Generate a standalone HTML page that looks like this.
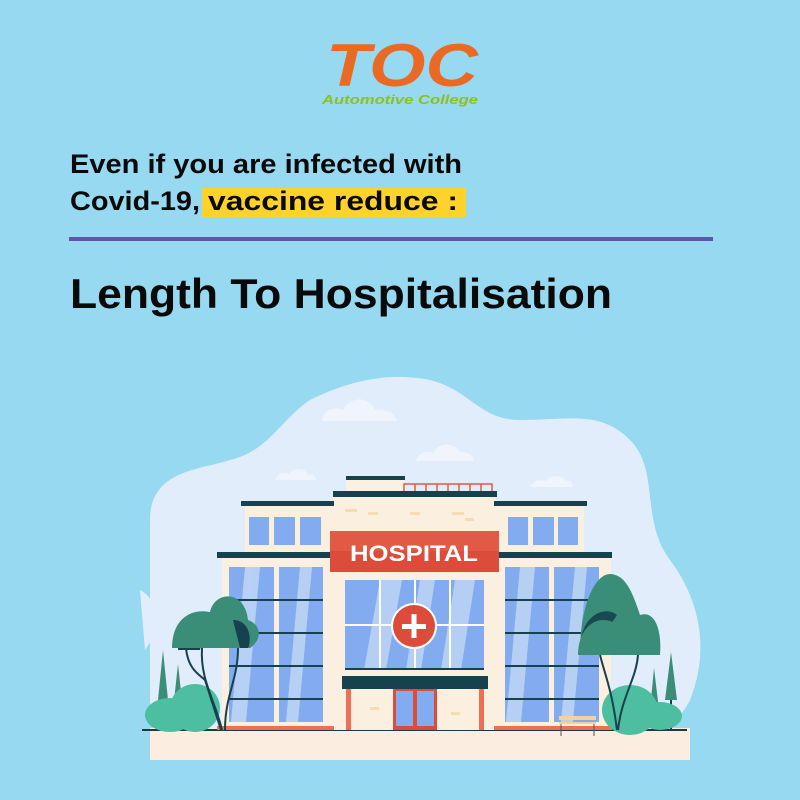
<!DOCTYPE html>
<html><head><meta charset="utf-8"><style>
html,body{margin:0;padding:0;background:#96d9f0;}
svg{display:block}
text{font-family:"Liberation Sans",sans-serif;font-weight:bold}
</style></head><body>
<svg width="800" height="800" viewBox="0 0 800 800" xmlns="http://www.w3.org/2000/svg">
<rect width="800" height="800" fill="#96d9f0"/>
<!-- logo -->
<text x="326" y="86" font-size="60" font-style="italic" fill="#ea6a24" textLength="152" lengthAdjust="spacingAndGlyphs">TOC</text>
<text x="322" y="104" font-size="13" font-style="italic" fill="#8cc21a" textLength="156" lengthAdjust="spacingAndGlyphs">Automotive College</text>
<!-- heading -->
<rect x="202" y="188" width="264" height="29" fill="#fdd32b"/>
<text x="70" y="173" font-size="27" fill="#0a0a0a" textLength="392" lengthAdjust="spacingAndGlyphs">Even if you are infected with</text>
<text x="70" y="210" font-size="27" fill="#0a0a0a" textLength="130" lengthAdjust="spacingAndGlyphs">Covid-19,</text>
<text x="208" y="210" font-size="27" fill="#0a0a0a" textLength="250" lengthAdjust="spacingAndGlyphs">vaccine reduce :</text>
<rect x="69" y="237" width="644" height="4" fill="#5a57a8"/>
<text x="70" y="308" font-size="42" fill="#0a0a0a" textLength="542" lengthAdjust="spacingAndGlyphs">Length To Hospitalisation</text>
<!-- blob -->
<path d="M150 520 C150 470 200 470 230 460 C270 450 280 420 310 400 C350 380 390 372 430 380 C470 390 480 420 520 420 C570 420 600 410 630 440 C660 470 640 520 670 560 C700 600 710 650 690 700 C670 740 620 760 540 760 L260 760 C190 760 150 740 150 700 Z" fill="#e2edfb"/>
<path d="M140 590 C160 600 160 630 145 650 Z" fill="#e2edfb"/>
<!-- clouds -->
<g fill="#f0f5fd">
<path d="M322 421 C322 410 335 406 343 410 C350 396 370 396 375 410 C385 408 396 414 397 421 Z"/>
<path d="M416 461 C418 452 428 450 433 453 C438 442 455 442 460 452 C468 452 474 456 474 461 Z"/>
<path d="M275 480 C277 473 285 472 289 474 C294 467 306 468 308 475 C313 474 316 477 316 480 Z"/>
<path d="M531 487 C533 480 541 479 546 481 C550 474 563 475 566 481 C571 480 573 484 573 487 Z"/>
</g>
<!-- ground -->
<rect x="150" y="728" width="540" height="32" fill="#fbeee0"/>
<rect x="142" y="729" width="545" height="2" fill="#1a3a48"/>
<!-- building -->
<g>
<rect x="346" y="480" width="58" height="12" fill="#fbf0e2"/>
<rect x="346" y="476" width="59" height="4" fill="#17414f"/>
<g stroke="#e35a43" stroke-width="1.5" fill="none"><rect x="404" y="484" width="88" height="8"/>
<path d="M415 484v8M426 484v8M437 484v8M448 484v8M459 484v8M470 484v8M481 484v8"/></g>
<rect x="333" y="496" width="163" height="234" fill="#fbefe0"/>
<rect x="333" y="491" width="164" height="6" fill="#17414f"/>
<!-- upper wings -->
<rect x="245" y="505" width="90" height="50" fill="#fbefe0"/>
<rect x="494" y="505" width="90" height="50" fill="#fbefe0"/>
<rect x="241" y="501" width="93" height="5" fill="#17414f"/>
<rect x="494" y="501" width="93" height="5" fill="#17414f"/>
<g fill="#82acef">
<rect x="249" y="517" width="20" height="28"/><rect x="274" y="517" width="21" height="28"/><rect x="300" y="517" width="21" height="28"/>
<rect x="508" y="517" width="20" height="28"/><rect x="533" y="517" width="21" height="28"/><rect x="558" y="517" width="20" height="28"/>
</g>
<!-- lower wings -->
<rect x="222" y="557" width="112" height="173" fill="#fbefe0"/>
<rect x="494" y="557" width="117" height="173" fill="#fbefe0"/>
<rect x="217" y="552" width="117" height="6" fill="#17414f"/>
<rect x="494" y="552" width="118" height="6" fill="#17414f"/>
<g fill="#82acef">
<rect x="229" y="567" width="45" height="155"/><rect x="279" y="567" width="44" height="155"/>
<rect x="505" y="567" width="44" height="155"/><rect x="554" y="567" width="45" height="155"/>
</g>
<g fill="#c4d9f6" opacity=".8">
<path d="M245 567h15l-14 155h-15z"/><path d="M300 567h12l-14 155h-12z"/>
<path d="M520 567h15l-14 155h-15z"/><path d="M575 567h12l-14 155h-12z"/>
</g>
<g fill="#17414f">
<rect x="229" y="599" width="94" height="2"/><rect x="229" y="632" width="94" height="2"/><rect x="229" y="665" width="94" height="2"/><rect x="229" y="698" width="94" height="2"/>
<rect x="505" y="599" width="94" height="2"/><rect x="505" y="632" width="94" height="2"/><rect x="505" y="665" width="94" height="2"/><rect x="505" y="698" width="94" height="2"/>
</g>
<rect x="217" y="726" width="117" height="4" fill="#ef6f55"/>
<rect x="494" y="726" width="118" height="4" fill="#ef6f55"/>
<!-- sign -->
<rect x="330" y="531" width="169" height="41" fill="#dd4b3a"/>
<rect x="330" y="531" width="169" height="20" fill="#e15a46"/>
<text x="414" y="561" font-size="22" fill="#ffffff" text-anchor="middle" textLength="128" lengthAdjust="spacingAndGlyphs">HOSPITAL</text>
<!-- center glass -->
<rect x="345" y="580" width="139" height="90" fill="#82acef"/>
<path d="M380 580h22l-16 90h-22zM420 580h15l-14 90h-15zM455 580h20l-14 90h-20z" fill="#c4d9f6" opacity=".75"/>
<g fill="#ffffff"><rect x="379" y="580" width="2" height="90"/><rect x="414" y="580" width="2" height="90"/><rect x="449" y="580" width="2" height="90"/><rect x="345" y="624" width="139" height="2"/></g>
<rect x="345" y="668" width="139" height="2" fill="#17414f"/>
<circle cx="414" cy="626" r="23" fill="#ffffff"/>
<circle cx="414" cy="626" r="21" fill="#dd4b3a"/>
<rect x="402" y="624" width="24" height="5" fill="#fff"/><rect x="411.5" y="614" width="5" height="24" fill="#fff"/>
<!-- door -->
<rect x="342" y="676" width="146" height="13" fill="#17414f"/>
<rect x="346" y="689" width="5" height="41" fill="#ef6f55"/><rect x="479" y="689" width="5" height="41" fill="#ef6f55"/>
<rect x="393" y="689" width="44" height="41" fill="#dd4b3a"/>
<rect x="396" y="691" width="17" height="35" fill="#82acef"/><rect x="417" y="691" width="17" height="35" fill="#82acef"/>
<!-- bricks -->
<g fill="#f6dcb5"><rect x="345" y="509" width="12" height="3"/><rect x="368" y="512" width="10" height="3"/><rect x="410" y="512" width="10" height="3"/><rect x="452" y="512" width="12" height="3"/><rect x="465" y="518" width="9" height="3"/><rect x="370" y="707" width="9" height="3"/><rect x="451" y="712" width="9" height="3"/></g>
</g>
<!-- bench -->
<rect x="559" y="716" width="37" height="4" fill="#f1d39d"/><rect x="559" y="722" width="37" height="2" fill="#f1d39d"/>
<g stroke="#555" stroke-width="1"><path d="M561 724v12M594 724v12"/></g>
<!-- left trees -->
<g>
<path d="M158 700 L163 650 L168 700Z" fill="#3a8e78"/><rect x="162" y="700" width="2" height="30" fill="#17414f"/>
<path d="M173 710 L178 664 L183 710Z" fill="#3a8e78"/>
<ellipse cx="170" cy="715" rx="25" ry="17" fill="#4dbfa0"/>
<ellipse cx="195" cy="708" rx="25" ry="24" fill="#4dbfa0"/>
<path d="M178 650 C178 625 195 615 205 625 L200 650Z" fill="#17414f"/>
<path d="M172 648 C172 620 190 608 210 612 C215 590 245 590 248 620 C262 625 262 640 250 648Z" fill="#3a8e78"/>
<path d="M233 620 C250 620 252 640 248 648 L240 648Z" fill="#17414f"/>
<g stroke="#17414f" stroke-width="2" fill="none"><path d="M186 648 C188 670 200 675 205 680 L221 730"/><path d="M202 648 C200 680 215 700 222 730"/><path d="M238 648 C238 680 225 695 225 730"/></g>
</g>
<!-- right trees -->
<g>
<path d="M665 700 L671 652 L677 700Z" fill="#3a8e78"/><rect x="670" y="700" width="2" height="30" fill="#17414f"/>
<path d="M650 710 L654 668 L659 710Z" fill="#3a8e78"/>
<ellipse cx="660" cy="716" rx="22" ry="14" fill="#4dbfa0"/>
<ellipse cx="630" cy="710" rx="28" ry="25" fill="#4dbfa0"/>
<path d="M580 655 C580 600 598 568 615 575 C628 578 635 600 640 615 C655 610 662 630 660 655Z" fill="#3a8e78"/>
<path d="M580 645 C582 615 605 605 617 615 L590 655 L582 655Z" fill="#17414f" opacity=".9"/>
<path d="M578 655 C578 625 600 612 618 625 L625 655Z" fill="#3a8e78"/>
<g stroke="#17414f" stroke-width="2" fill="none"><path d="M600 655 C605 675 612 690 617 730"/><path d="M638 655 C636 680 622 695 618 730"/></g>
</g>
</svg>
</body></html>
